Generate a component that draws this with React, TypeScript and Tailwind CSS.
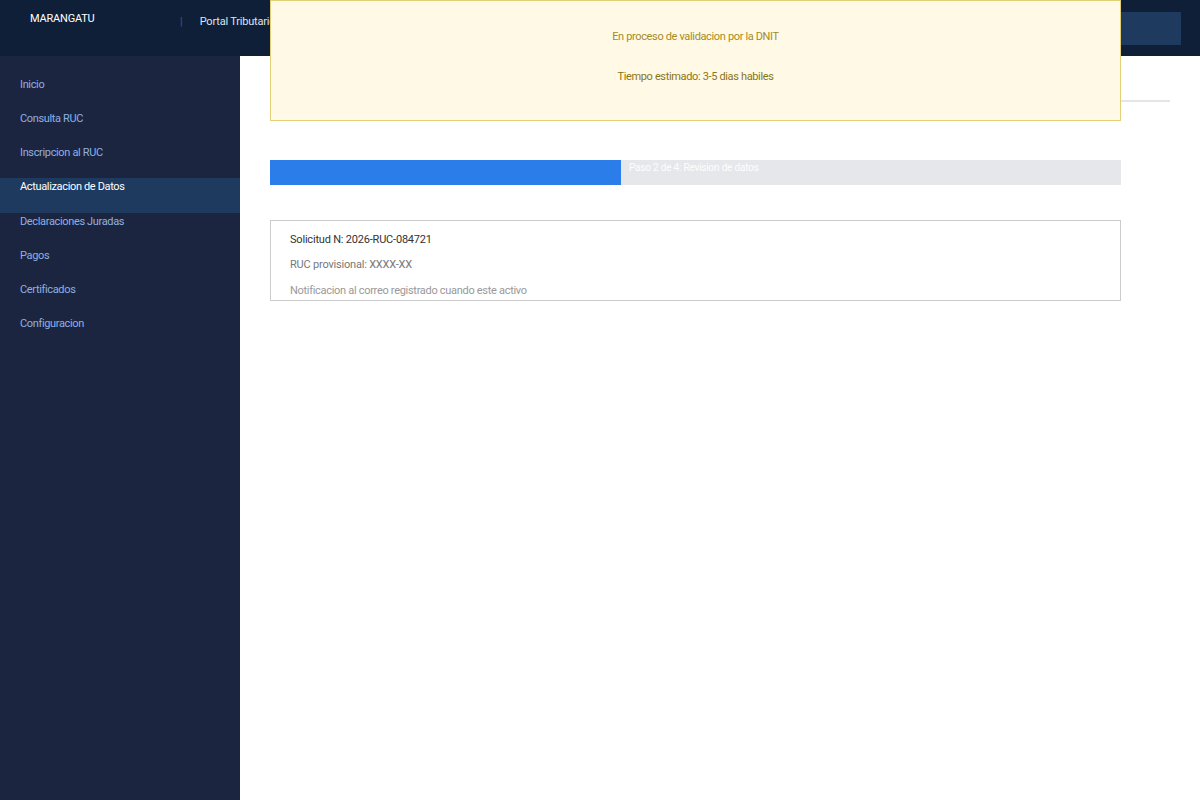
import React from "react";

const items = [
  "Inicio",
  "Consulta RUC",
  "Inscripcion al RUC",
  "Actualizacion de Datos",
  "Declaraciones Juradas",
  "Pagos",
  "Certificados",
  "Configuracion",
];

export default function App() {
  return (
    <div
      className="relative w-[1200px] h-[800px] overflow-hidden bg-white flex flex-col"
      style={{ fontFamily: "Roboto, 'Liberation Sans', sans-serif" }}
    >
      <header className="h-[56px] shrink-0 bg-[#0f1f38] flex items-start px-[30px]">
        <div className="pt-[12px] text-[11px] leading-[14px] tracking-[-0.2px] text-white w-[150px]">MARANGATU</div>
        <div className="pt-[15px] text-[11px] leading-[14px] text-[#3d5a80]">|</div>
        <div className="pt-[15px] pl-[17px] text-[11px] leading-[14px] tracking-[-0.2px] text-[#dbe4f0]">Portal Tributario</div>
        <div className="ml-auto mt-[12px] w-[100px] h-[33px] bg-[#1e3a5f] mr-[-11px]"></div>
      </header>
      <div className="flex flex-1">
        <aside className="w-[240px] shrink-0 bg-[#1b2540] pt-[20px]">
          {items.map((it, i) => (
            <div
              key={it}
              className={
                i === 3
                  ? "h-[34.15px] pt-[2px] pl-[20px] text-[11px] leading-[14px] tracking-[-0.35px] bg-[#1e3a5f] text-white"
                  : "h-[34.15px] pt-[2px] pl-[20px] text-[11px] leading-[14px] tracking-[-0.35px] text-[#8fb0e0]"
              }
            >
              {it}
            </div>
          ))}
        </aside>
        <main className="flex-1 px-[30px]">
          <div className="h-[46px] border-b-2 border-[#e5e5e5]"></div>
          <div className="mt-[58px] w-[851px] h-[25px] bg-[#e5e7eb] flex">
            <div className="w-[351px] h-full bg-[#2b7de9]"></div>
            <div className="pl-[8px] pt-[1px] text-[10px] leading-[14px] tracking-[-0.2px] text-white/90">
              Paso 2 de 4: Revision de datos
            </div>
          </div>
          <div className="mt-[35px] w-[851px] h-[81px] border border-[#cccccc] px-[19px] pt-[12px] tracking-[-0.2px]">
            <div className="text-[11px] leading-[14px] text-[#333333]">Solicitud N: 2026-RUC-084721</div>
            <div className="mt-[11px] text-[11px] leading-[14px] text-[#777777]">RUC provisional: XXXX-XX</div>
            <div className="mt-[12px] text-[11px] leading-[14px] text-[#999999] tracking-[-0.3px]">
              Notificacion al correo registrado cuando este activo
            </div>
          </div>
        </main>
      </div>
      <div className="absolute left-[270px] top-0 w-[851px] h-[121px] bg-[#fff9e6] border border-[#e3cf7a] flex flex-col items-center pt-[28px] tracking-[-0.35px]">
        <div className="text-[11px] leading-[16px] text-[#a68b1f]">En proceso de validacion por la DNIT</div>
        <div className="mt-[24px] text-[11px] leading-[16px] text-[#8a7416]">Tiempo estimado: 3-5 dias habiles</div>
      </div>
    </div>
  );
}
